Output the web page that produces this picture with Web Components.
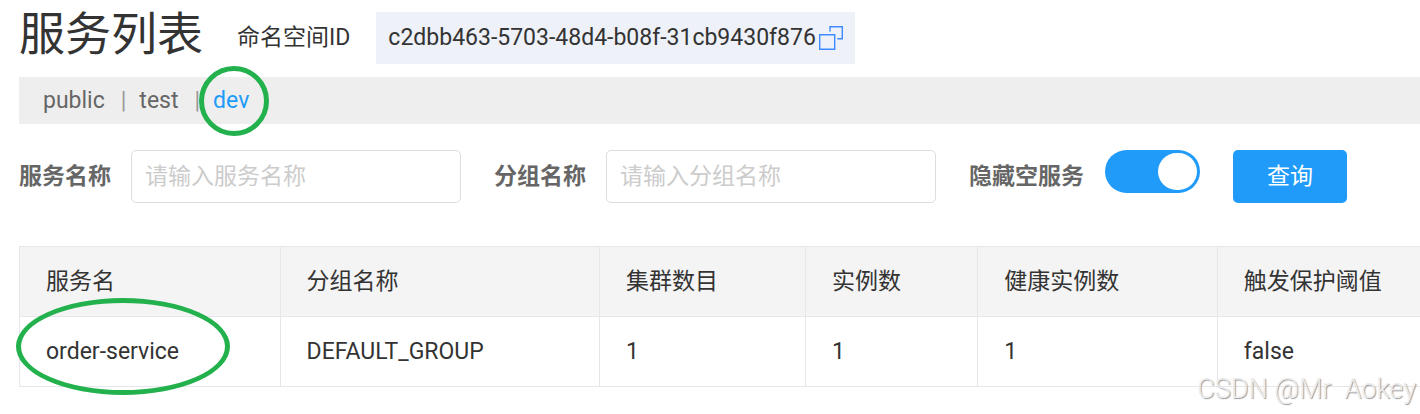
<!DOCTYPE html>
<html lang="zh-CN">
<head>
<meta charset="utf-8">
<title>服务列表</title>
<style>
	body {
		margin: 0;
		background: #fff;
		overflow: hidden;
	}
</style>
</head>
<body>
<service-page></service-page>

<script>
class RingMark extends HTMLElement {
	constructor() {
		super();
		this.attachShadow({ mode: "open" });
	}

	connectedCallback() {
		this.shadowRoot.innerHTML = `
			<style>
				:host {
					position: absolute;
					box-sizing: border-box;
					border: 5px solid #22b14c;
					border-radius: 50%;
					pointer-events: none;
				}
			</style>
		`;
	}
}

class NamespaceId extends HTMLElement {
	constructor() {
		super();
		this.attachShadow({ mode: "open" });
	}

	connectedCallback() {
		this.shadowRoot.innerHTML = `
			<style>
				:host {
					display: flex;
					align-items: center;
					gap: 3px;
					height: 52px;
					padding: 0 12px;
					box-sizing: border-box;
					background: #eef1f7;
				}

				button {
					display: flex;
					padding: 0;
					border: 0;
					background: none;
					cursor: pointer;
				}
			</style>
			<span><slot></slot></span>
			<button type="button" aria-label="复制">
				<svg width="24" height="24" viewBox="0 0 24 24" fill="none" stroke="#3d8bff" stroke-width="1.4">
					<path d="M.7 8.7h15v14.6h-15z"/>
					<path d="M11 5.5V.7h12.3v12h-5"/>
				</svg>
			</button>
		`;
	}
}

class NamespaceBar extends HTMLElement {
	constructor() {
		super();
		this.attachShadow({ mode: "open" });
	}

	connectedCallback() {
		this.shadowRoot.innerHTML = `
			<style>
				:host {
					display: block;
					background: #eee;
				}

				nav {
					display: flex;
					align-items: center;
					height: 47px;
					padding-left: 24px;
				}

				.item {
					position: relative;
					display: flex;
				}

				.item + .item::before {
					content: "|";
					color: #999;
					margin: 0 13px 0 16px;
				}

				a {
					color: #666;
					text-decoration: none;
				}

				a[aria-current] {
					color: #209bfa;
				}

				ring-mark {
					width: 70px;
					height: 70px;
					top: -19px;
					right: -20px;
				}
			</style>
			<nav>
				<span class="item"><a href="#public">public</a></span>
				<span class="item"><a href="#test">test</a></span>
				<span class="item"><a href="#dev" aria-current="page">dev</a><ring-mark></ring-mark></span>
			</nav>
		`;
	}
}

class SearchField extends HTMLElement {
	constructor() {
		super();
		this.attachShadow({ mode: "open" });
	}

	connectedCallback() {
		const label = this.getAttribute("label");
		this.shadowRoot.innerHTML = `
			<style>
				:host {
					display: flex;
					align-items: center;
					gap: 20px;
				}

				label {
					color: #666;
					font-weight: bold;
					white-space: nowrap;
				}

				input {
					box-sizing: border-box;
					width: 330px;
					height: 53px;
					padding: 0 13px;
					border: 1px solid #dcdee3;
					border-radius: 5px;
					font: inherit;
					color: #333;
					outline: none;
				}

				input::placeholder {
					color: #ccc;
				}
			</style>
			<label for="field">${label}</label>
			<input id="field" type="text" placeholder="请输入${label}">
		`;
	}
}

class ToggleSwitch extends HTMLElement {
	constructor() {
		super();
		this.attachShadow({ mode: "open" });
	}

	connectedCallback() {
		this.shadowRoot.innerHTML = `
			<style>
				:host {
					display: flex;
					gap: 21px;
				}

				label {
					line-height: 53px;
					color: #666;
					font-weight: bold;
					white-space: nowrap;
				}

				input {
					appearance: none;
					display: flex;
					align-items: center;
					box-sizing: border-box;
					width: 95px;
					height: 43px;
					margin: 0;
					padding: 3px;
					border-radius: 22px;
					background: #ccc;
					cursor: pointer;
				}

				input:checked {
					background: #209bfa;
					justify-content: flex-end;
				}

				input::before {
					content: "";
					width: 39px;
					height: 37px;
					border-radius: 20px;
					background: #fff;
				}
			</style>
			<label for="toggle"><slot></slot></label>
			<input id="toggle" type="checkbox" role="switch" checked>
		`;
	}
}

class ServiceTable extends HTMLElement {
	constructor() {
		super();
		this.attachShadow({ mode: "open" });
		this.columns = [
			["服务名", "18.6%"],
			["分组名称", "22.8%"],
			["集群数目", "14.7%"],
			["实例数", "12.3%"],
			["健康实例数", "17.1%"],
			["触发保护阈值", "14.5%"]
		];
		this.rows = [
			["order-service", "DEFAULT_GROUP", "1", "1", "1", "false"]
		];
	}

	connectedCallback() {
		const cols = this.columns.map(c => `<col style="width: ${c[1]}">`).join("");
		const head = this.columns.map(c => `<th scope="col">${c[0]}</th>`).join("");
		const body = this.rows.map(r => `<tr>${r.map(v => `<td>${v}</td>`).join("")}</tr>`).join("");

		this.shadowRoot.innerHTML = `
			<style>
				:host {
					display: block;
					position: relative;
				}

				table {
					width: 100%;
					table-layout: fixed;
					border-collapse: separate;
					border-spacing: 0;
					border-top: 1px solid #e6e7eb;
				}

				th, td {
					box-sizing: border-box;
					height: 70px;
					padding: 0 0 0 26px;
					border-left: 1px solid #e6e7eb;
					border-bottom: 1px solid #e6e7eb;
					text-align: left;
					font-weight: normal;
					white-space: nowrap;
					color: #333;
				}

				th {
					background: #f4f4f4;
				}

				ring-mark {
					left: -3px;
					bottom: -8px;
					width: 214px;
					height: 97px;
				}
			</style>
			<table>
				<colgroup>${cols}</colgroup>
				<thead><tr>${head}</tr></thead>
				<tbody>${body}</tbody>
			</table>
			<ring-mark></ring-mark>
		`;
	}
}

class ServicePage extends HTMLElement {
	constructor() {
		super();
		this.attachShadow({ mode: "open" });
	}

	connectedCallback() {
		this.shadowRoot.innerHTML = `
			<style>
				:host {
					display: block;
					position: relative;
					box-sizing: border-box;
					min-height: 100vh;
					padding: 0 0 24px 19px;
					font: 23px/32px Roboto, "Noto Sans CJK SC", sans-serif;
					color: #333;
				}

				header {
					display: flex;
					align-items: center;
					height: 76px;
					margin-bottom: 1px;
				}

				h1 {
					margin: 0 34px 8px 0;
					font-size: 46px;
					line-height: 64px;
					font-weight: normal;
				}

				namespace-id {
					margin-left: 26px;
				}

				form {
					display: flex;
					align-items: flex-start;
					gap: 33px;
					margin: 26px 0 43px;
				}

				form button {
					height: 53px;
					padding: 0 34px;
					border: 0;
					border-radius: 5px;
					background: #209bfa;
					color: #fff;
					font: inherit;
					white-space: nowrap;
					cursor: pointer;
				}

				.watermark {
					position: absolute;
					right: 4px;
					bottom: 9px;
					font-size: 27px;
					font-weight: 300;
					color: #eee;
					text-shadow: 1px 1px 1px #999;
				}
			</style>
			<header>
				<h1>服务列表</h1>
				<span>命名空间ID</span>
				<namespace-id>c2dbb463-5703-48d4-b08f-31cb9430f876</namespace-id>
			</header>
			<namespace-bar></namespace-bar>
			<form>
				<search-field label="服务名称"></search-field>
				<search-field label="分组名称"></search-field>
				<toggle-switch>隐藏空服务</toggle-switch>
				<button type="button">查询</button>
			</form>
			<service-table></service-table>
			<div class="watermark">CSDN @Mr&nbsp; Aokey</div>
		`;
	}
}

customElements.define("ring-mark", RingMark);
customElements.define("namespace-id", NamespaceId);
customElements.define("namespace-bar", NamespaceBar);
customElements.define("search-field", SearchField);
customElements.define("toggle-switch", ToggleSwitch);
customElements.define("service-table", ServiceTable);
customElements.define("service-page", ServicePage);
</script>
</body>
</html>
